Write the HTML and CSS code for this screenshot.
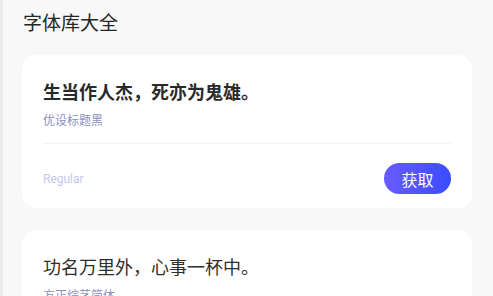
FILE: index.html
```html
<!DOCTYPE html>
<html lang="zh-CN">
<head>
<meta charset="utf-8">
<title>字体库大全</title>
<link rel="stylesheet" href="styles.css">
</head>
<body>
<div class="page">
  <h1 class="page-title">字体库大全</h1>
  <div class="card">
    <div class="sample sample-bold">生当作人杰，死亦为鬼雄。</div>
    <div class="font-name">优设标题黑</div>
    <div class="divider"></div>
    <div class="footer">
      <span class="weight">Regular</span>
      <button class="get-btn">获取</button>
    </div>
  </div>
  <div class="card">
    <div class="sample">功名万里外，心事一杯中。</div>
    <div class="font-name">方正综艺简体</div>
    <div class="divider"></div>
    <div class="footer">
      <span class="weight">Regular</span>
      <button class="get-btn">获取</button>
    </div>
  </div>
</div>
</body>
</html>
```
FILE: styles.css
```css
html, body {
  margin: 0;
  padding: 0;
  background: #f8f8f8;
  height: 100%;
  overflow: hidden;
}
body {
  font-family: "Noto Sans CJK SC", "Noto Sans", sans-serif;
}
.page {
  border-left: 3px solid #ebebeb;
  padding: 9px 21px 0 19px;
  min-height: 100%;
  box-sizing: border-box;
}
.page-title {
  margin: 0 0 20px 1px;
  font-size: 19px;
  line-height: 26px;
  font-weight: 400;
  color: #262626;
}
.card {
  background: #ffffff;
  border-radius: 14px;
  padding: 23px 21px 14px 21px;
  margin-bottom: 22px;
}
.sample {
  font-size: 18px;
  line-height: 26px;
  color: #2e2e2e;
  font-weight: 400;
}
.sample-bold {
  font-weight: 700;
  color: #2a2a2a;
}
.font-name {
  margin-top: 7px;
  font-size: 12px;
  line-height: 18px;
  color: #8a8fbf;
}
.divider {
  margin-top: 14px;
  height: 1px;
  background: #f3f3f5;
}
.footer {
  padding-top: 19px;
  display: flex;
  align-items: center;
  justify-content: space-between;
}
.weight {
  font-family: Roboto, "Noto Sans", sans-serif;
  font-size: 12px;
  color: #c3c7f1;
}
.get-btn {
  width: 67px;
  height: 31px;
  border: none;
  border-radius: 16px;
  background: linear-gradient(to right, #6a5bff, #3a4cff);
  color: #ffffff;
  font-family: "Noto Sans CJK SC", sans-serif;
  font-size: 16px;
  padding: 0;
  cursor: pointer;
}
```
